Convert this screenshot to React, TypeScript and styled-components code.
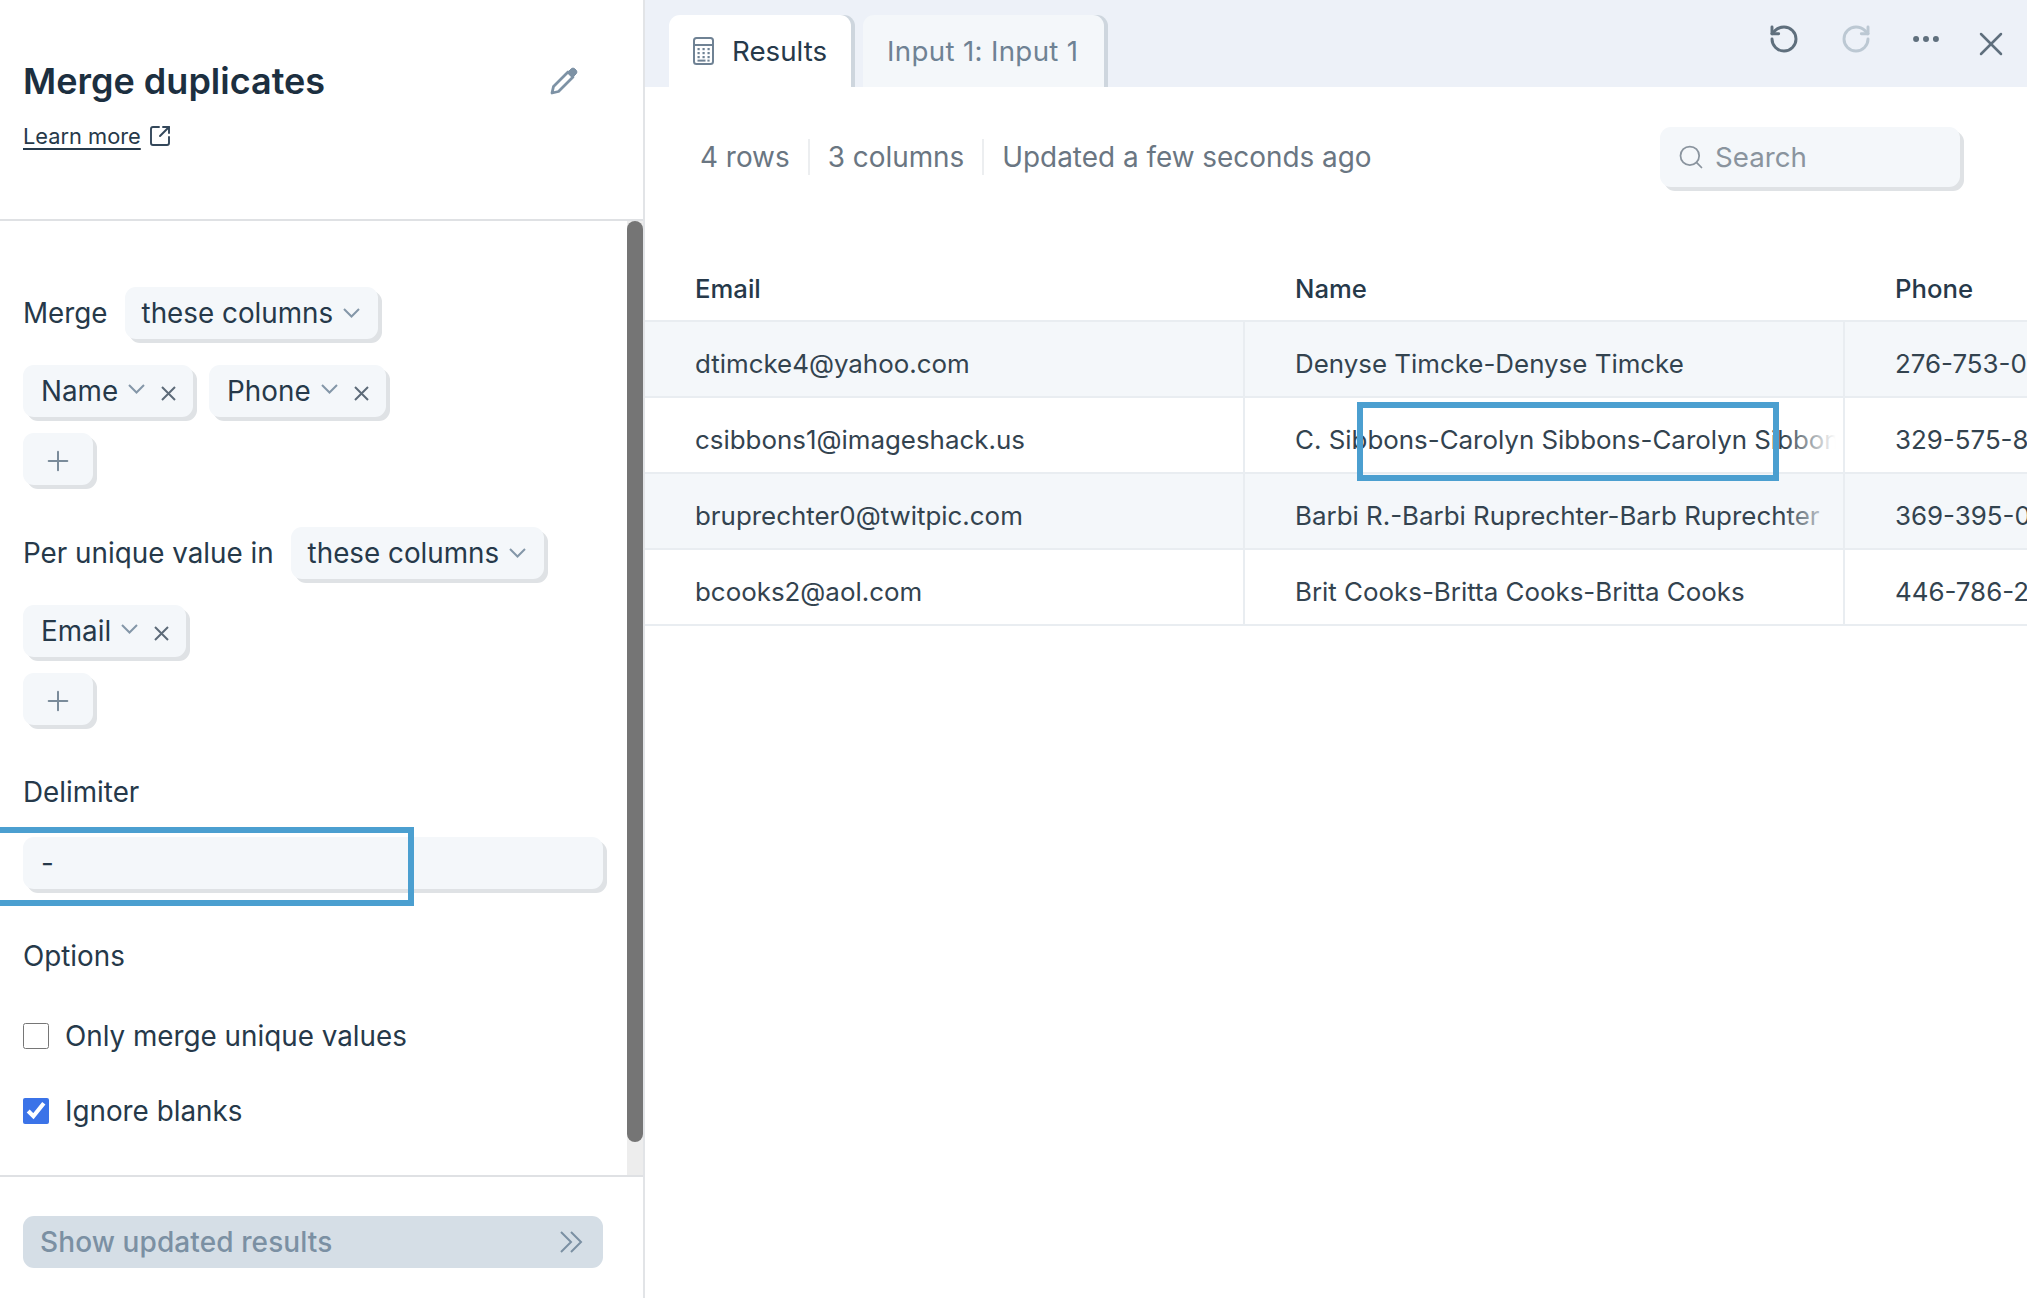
import React from "react";
import styled, { createGlobalStyle } from "styled-components";
import { Ellipsis, Plus, RotateCcw, RotateCw, Search, SquareArrowOutUpRight, X } from "lucide-react";

const GlobalStyle = createGlobalStyle`
  html, body {
    margin: 0;
    padding: 0;
    height: 100%;
    overflow: hidden;
    background: #fff;
    font-family: Inter, "Noto Sans", sans-serif;
    color: #26394a;
  }
  * { box-sizing: border-box; }
`;

const Page = styled.div`
  display: flex;
  width: 2027px;
  height: 1298px;
  overflow: hidden;
`;

/* left settings pane */
const Pane = styled.aside`
  position: relative;
  display: flex;
  flex-direction: column;
  flex: 0 0 645px;
  border-right: 2px solid #e2e4e7;
`;

const PaneHeader = styled.header`
  flex: 0 0 221px;
  padding: 57px 65px 0 23px;
  border-bottom: 2px solid #dfe1e4;
`;

const TitleRow = styled.div`
  display: flex;
  align-items: center;
  justify-content: space-between;
  height: 48px;
`;

const Title = styled.h1`
  margin: 0;
  font-size: 36px;
  font-weight: 600;
  color: #1c2f40;
`;

const LearnMore = styled.a`
  display: inline-flex;
  align-items: center;
  gap: 7px;
  margin-top: 18px;
  font-size: 21.8px;
  color: #26394a;

  span {
    text-decoration: underline;
    text-underline-offset: 4px;
  }
  svg {
    color: #33475a;
  }
`;

const PaneBody = styled.div`
  flex: 1;
  display: flex;
  min-height: 0;
`;

const Form = styled.div`
  flex: 1;
  padding: 66px 0 0 23px;
`;

const Track = styled.div`
  flex: 0 0 16px;
  background: #ededed;
`;

const Thumb = styled.div`
  height: 921px;
  border-radius: 8px;
  background: #757575;
`;

const Line = styled.div<{ $top?: number; $gap?: number }>`
  display: flex;
  align-items: center;
  gap: ${(p) => p.$gap ?? 16}px;
  margin-top: ${(p) => p.$top ?? 0}px;
`;

const Label = styled.span`
  font-size: 27.8px;
  line-height: 34px;
  color: #26394a;
`;

const Chip = styled.div<{ $tag?: boolean }>`
  display: inline-flex;
  align-items: center;
  height: 52px;
  padding: 0 ${(p) => (p.$tag ? 17 : 18)}px 0 ${(p) => (p.$tag ? 18 : 17)}px;
  border-radius: 11px;
  background: #f4f7fa;
  box-shadow: 4px 4px 0 #dfe2e5;
  font-size: 27.8px;
  color: #26394a;
  white-space: nowrap;
`;

const ChevronMark = styled.svg<{ $lift?: boolean }>`
  flex: none;
  width: 17px;
  height: 10px;
  margin-left: 10px;
  margin-bottom: ${(p) => (p.$lift ? 4 : 0)}px;
  fill: none;
  stroke: #8497a8;
  stroke-width: 2;
`;

const RemoveMark = styled.svg`
  flex: none;
  width: 15px;
  height: 15px;
  margin-left: 16px;
  margin-top: 4px;
  fill: none;
  stroke: #5d6b78;
  stroke-width: 2;
`;

const AddButton = styled.button`
  display: flex;
  align-items: center;
  justify-content: center;
  width: 70px;
  height: 52px;
  padding: 4px 0 0;
  border: none;
  border-radius: 11px;
  background: #f4f7fa;
  box-shadow: 4px 4px 0 #dfe2e5;
  color: #7a8b9a;
`;

const DelimiterInput = styled.div`
  display: flex;
  align-items: center;
  width: 580px;
  height: 52px;
  margin-top: 28px;
  padding-left: 18px;
  border-radius: 11px;
  background: #f4f7fa;
  box-shadow: 4px 4px 0 #dfe2e5;
  font-size: 27.8px;
  color: #26394a;
`;

const Check = styled.label<{ $top: number }>`
  display: flex;
  align-items: center;
  gap: 16px;
  height: 26px;
  margin-top: ${(p) => p.$top}px;
  font-size: 27.8px;
  color: #26394a;

  input {
    width: 26px;
    height: 26px;
    margin: 0;
    accent-color: #3b73e8;
  }
`;

const PaneFooter = styled.footer`
  flex: 0 0 123px;
  padding: 39px 0 0 23px;
  border-top: 2px solid #dfe1e4;
`;

const ShowResults = styled.button`
  display: flex;
  align-items: center;
  justify-content: space-between;
  width: 580px;
  height: 52px;
  padding: 0 20px 0 17px;
  border: none;
  border-radius: 11px;
  background: #d5dee6;
  font: inherit;
  font-size: 28px;
  font-weight: 500;
  letter-spacing: 0.1px;
  color: #7b90a3;

  svg {
    fill: none;
    stroke: #7b90a3;
    stroke-width: 2;
  }
`;

/* annotation rectangles drawn over the screenshot */
const Highlight = styled.div<{ $x: number; $y: number; $w: number; $h: number }>`
  position: absolute;
  left: ${(p) => p.$x}px;
  top: ${(p) => p.$y}px;
  width: ${(p) => p.$w}px;
  height: ${(p) => p.$h}px;
  border: 6px solid #4b9fd0;
  pointer-events: none;
`;

/* right results area */
const Main = styled.main`
  position: relative;
  flex: 1;
  display: flex;
  flex-direction: column;
  min-width: 0;
`;

const TabBar = styled.div`
  display: flex;
  align-items: flex-end;
  gap: 12px;
  flex: 0 0 87px;
  padding-left: 24px;
  background: #edf1f8;
`;

const Tab = styled.div<{ $active?: boolean }>`
  display: flex;
  align-items: center;
  gap: 18px;
  height: 72px;
  padding: 0 ${(p) => (p.$active ? 24 : 26)}px 0 24px;
  border-radius: 11px 11px 0 0;
  background: ${(p) => (p.$active ? "#fff" : "#f4f7fa")};
  box-shadow: 4px 0 0 #ced6de;
  font-size: 27.7px;
  letter-spacing: ${(p) => (p.$active ? 0 : 0.32)}px;
  color: ${(p) => (p.$active ? "#26394a" : "#6f8294")};
`;

const TabActions = styled.div`
  display: flex;
  align-items: center;
  margin-left: auto;
  height: 100%;
  padding: 0 16px 10px 0;
`;

const ActionIcon = styled.span<{ $muted?: boolean; $left?: number; $drop?: number }>`
  display: flex;
  margin-left: ${(p) => p.$left ?? 0}px;
  margin-top: ${(p) => p.$drop ?? 0}px;
  color: ${(p) => (p.$muted ? "#bcc8d3" : "#5f6f7d")};
`;

const Toolbar = styled.div`
  display: flex;
  align-items: center;
  justify-content: space-between;
  flex: 0 0 169px;
  padding: 40px 67px 69px 55px;
`;

const Stats = styled.div`
  display: flex;
  align-items: center;
  font-size: 27.9px;
  color: #6a7682;
`;

const Stat = styled.span`
  padding: 0 18px;
  border-left: 2px solid #eceef0;
  line-height: 36px;

  &:first-child {
    padding-left: 0;
    border-left: none;
  }
`;

const SearchBox = styled.div`
  display: flex;
  align-items: center;
  gap: 10px;
  width: 300px;
  height: 60px;
  padding-left: 17px;
  border-radius: 11px;
  background: #f4f7fa;
  box-shadow: 4px 4px 0 #dfe2e5;
  font-size: 27.7px;
  color: #8a949e;

  svg {
    color: #8a949e;
  }
`;

const Table = styled.div`
  flex: 1;
  overflow: hidden;
`;

const Row = styled.div<{ $shade?: boolean; $head?: boolean }>`
  display: flex;
  height: ${(p) => (p.$head ? 66 : 76)}px;
  border-bottom: 2px solid #e9edf1;
  background: ${(p) => (p.$shade ? "#f4f7fa" : "#fff")};
`;

const Cell = styled.div<{ $first?: boolean; $head?: boolean; $bg?: string; $fade?: boolean }>`
  position: relative;
  flex: 0 0 ${(p) => (p.$first ? 598 : 600)}px;
  display: flex;
  align-items: center;
  overflow: hidden;
  padding-left: 50px;
  padding-top: ${(p) => (p.$head ? 0 : 8)}px;
  border-left: ${(p) => (p.$first ? "0" : "2px")} solid ${(p) => (p.$head ? "transparent" : "#e9edf1")};
  font-size: ${(p) => (p.$head ? 25.7 : 25.9)}px;
  font-weight: ${(p) => (p.$head ? 500 : 400)};
  color: ${(p) => (p.$head ? "#26394a" : "#33434f")};
  white-space: nowrap;

  &::after {
    content: "";
    display: ${(p) => (p.$fade ? "block" : "none")};
    position: absolute;
    top: 0;
    right: 0;
    bottom: 0;
    width: 60px;
    background: linear-gradient(to right, transparent, ${(p) => p.$bg ?? "#fff"} 88%);
  }
`;

const Chevron = ({ lift }: { lift?: boolean }) => (
  <ChevronMark viewBox="0 0 17 10" $lift={lift}>
    <path d="M1 1l7.5 7.5L16 1" />
  </ChevronMark>
);

const Pencil = () => (
  <svg width="28" height="28" viewBox="0 0 28 28" fill="none" stroke="#7d92a5" strokeWidth="2.8" strokeLinejoin="round">
    <path d="M2 26l1.5-6.5L18 5l5 5L8.5 24.5z" />
    <path
      d="M18 5l3-3a2.8 2.8 0 0 1 4 0l1 1a2.8 2.8 0 0 1 0 4l-3 3z"
      fill="#7d92a5"
      strokeWidth="1"
    />
  </svg>
);

const CalculatorIcon = () => (
  <svg width="21" height="28" viewBox="0 0 21 28" fill="#6f8294">
    <rect x="1" y="1" width="19" height="26" rx="2.5" fill="none" stroke="#6f8294" strokeWidth="2" />
    <rect x="1" y="7" width="19" height="2" />
    {[12, 16, 20].map((y) =>
      [5.5, 10.5, 15.5].map((x) => <rect key={`${x}-${y}`} x={x - 1} y={y - 1} width="2.2" height="2.2" />)
    )}
    <rect x="4.5" y="22.6" width="8" height="2" />
    <rect x="14.4" y="22.6" width="2.2" height="2" />
  </svg>
);

const Tag = ({ name }: { name: string }) => (
  <Chip $tag>
    {name}
    <Chevron lift />
    <RemoveMark viewBox="0 0 15 15">
      <path d="M1 1l13 13M14 1L1 14" />
    </RemoveMark>
  </Chip>
);

const Add = () => (
  <AddButton>
    <Plus size={32} strokeWidth={1.5} />
  </AddButton>
);

const rows = [
  { email: "dtimcke4@yahoo.com", name: "Denyse Timcke-Denyse Timcke", phone: "276-753-0416", shade: true },
  { email: "csibbons1@imageshack.us", name: "C. Sibbons-Carolyn Sibbons-Carolyn Sibbons", phone: "329-575-8127", fade: true },
  { email: "bruprechter0@twitpic.com", name: "Barbi R.-Barbi Ruprechter-Barb Ruprechter", phone: "369-395-0722", shade: true, fade: true },
  { email: "bcooks2@aol.com", name: "Brit Cooks-Britta Cooks-Britta Cooks", phone: "446-786-2301" },
];

export default function App() {
  return (
    <Page>
      <GlobalStyle />
      <Pane>
        <PaneHeader>
          <TitleRow>
            <Title>Merge duplicates</Title>
            <Pencil />
          </TitleRow>
          <LearnMore>
            <span>Learn more</span>
            <SquareArrowOutUpRight size={24} strokeWidth={1.9} />
          </LearnMore>
        </PaneHeader>
        <PaneBody>
          <Form>
            <Line $gap={17}>
              <Label>Merge</Label>
              <Chip>
                these columns
                <Chevron />
              </Chip>
            </Line>
            <Line $top={26}>
              <Tag name="Name" />
              <Tag name="Phone" />
            </Line>
            <Line $top={16}>
              <Add />
            </Line>
            <Line $top={42} $gap={17}>
              <Label>Per unique value in</Label>
              <Chip>
                these columns
                <Chevron />
              </Chip>
            </Line>
            <Line $top={26}>
              <Tag name="Email" />
            </Line>
            <Line $top={16}>
              <Add />
            </Line>
            <Line $top={50}>
              <Label>Delimiter</Label>
            </Line>
            <DelimiterInput>-</DelimiterInput>
            <Line $top={50}>
              <Label>Options</Label>
            </Line>
            <Check $top={50}>
              <input type="checkbox" />
              Only merge unique values
            </Check>
            <Check $top={49}>
              <input type="checkbox" defaultChecked />
              Ignore blanks
            </Check>
          </Form>
          <Track>
            <Thumb />
          </Track>
        </PaneBody>
        <PaneFooter>
          <ShowResults>
            Show updated results
            <svg width="24" height="22" viewBox="0 0 24 22">
              <path d="M2 1l10 10L2 21M12 1l10 10-10 10" />
            </svg>
          </ShowResults>
        </PaneFooter>
        <Highlight $x={-6} $y={827} $w={420} $h={79} />
      </Pane>
      <Main>
        <TabBar>
          <Tab $active>
            <CalculatorIcon />
            Results
          </Tab>
          <Tab>Input 1: Input 1</Tab>
          <TabActions>
            <ActionIcon>
              <RotateCcw size={32} strokeWidth={2.2} />
            </ActionIcon>
            <ActionIcon $muted $left={40}>
              <RotateCw size={32} strokeWidth={2.2} />
            </ActionIcon>
            <ActionIcon $left={37}>
              <Ellipsis size={34} strokeWidth={2.2} />
            </ActionIcon>
            <ActionIcon $left={28} $drop={10}>
              <X size={40} strokeWidth={1.5} />
            </ActionIcon>
          </TabActions>
        </TabBar>
        <Toolbar>
          <Stats>
            <Stat>4 rows</Stat>
            <Stat>3 columns</Stat>
            <Stat>Updated a few seconds ago</Stat>
          </Stats>
          <SearchBox>
            <Search size={28} strokeWidth={1.5} />
            Search
          </SearchBox>
        </Toolbar>
        <Table>
          <Row $head>
            <Cell $first $head>Email</Cell>
            <Cell $head>Name</Cell>
            <Cell $head>Phone</Cell>
          </Row>
          {rows.map((r) => (
            <Row key={r.email} $shade={r.shade}>
              <Cell $first>{r.email}</Cell>
              <Cell $fade={r.fade} $bg={r.shade ? "#f4f7fa" : "#fff"}>{r.name}</Cell>
              <Cell>{r.phone}</Cell>
            </Row>
          ))}
        </Table>
        <Highlight $x={712} $y={402} $w={422} $h={79} />
      </Main>
    </Page>
  );
}
